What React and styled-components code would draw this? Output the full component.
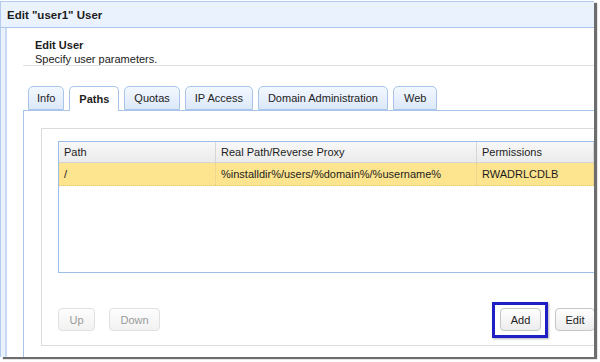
import React from "react";
import styled, { createGlobalStyle, css } from "styled-components";

const Global = createGlobalStyle`
  * { box-sizing: border-box; }
  html, body { margin: 0; padding: 0; background: #fff; }
  body { font-family: "Liberation Sans", Arial, Helvetica, sans-serif; font-size: 11px; color: #222; }
`;

const Page = styled.div`
  padding-top: 1px;
  width: 600px;
  height: 362px;
`;

const Window = styled.div`
  width: 594px;
  height: 356px;
  overflow: hidden;
  border-top: 1px solid #b3cbed;
  border-left: 1px solid #b3cbed;
  background: #eaf2fd;
  box-shadow: 3px 2px 1px rgba(60, 60, 60, 0.75);
  display: flex;
  flex-direction: column;
`;

const TitleBar = styled.div`
  height: 26px;
  flex: none;
  display: flex;
  align-items: center;
  padding-left: 6px;
  font-weight: bold;
  font-size: 11.5px;
  color: #1c1c1c;
  background: #eaf2fd;
  border-bottom: 1px solid #a9c5ea;
`;

const Body = styled.div`
  flex: 1;
  padding-left: 4px;
  background: #eaf2fd;
  display: flex;
`;

const Panel = styled.div`
  flex: 1;
  background: #fff;
  border-left: 2px solid #c8dbf6;
  padding-left: 16px;
  display: flex;
  flex-direction: column;
  min-width: 0;
`;

const Header = styled.div`
  height: 38px;
  flex: none;
  border-bottom: 1px solid #e2e2e2;
  padding: 10px 0 0 12px;
  line-height: 14px;
`;

const HeaderTitle = styled.div`
  font-weight: bold;
  font-size: 11px;
  color: #1c1c1c;
`;

const HeaderSub = styled.div`
  font-size: 11px;
  color: #222;
`;

const TabStrip = styled.div`
  display: flex;
  gap: 5px;
  padding-left: 5px;
  margin-top: 20px;
  height: 25px;
  flex: none;
  position: relative;
  z-index: 1;
`;

const Tab = styled.div`
  height: ${(p) => (p.$active ? "25px" : "24px")};
  padding: 0 ${(p) => p.$pad}px;
  display: flex;
  align-items: center;
  font-size: 11px;
  color: #222;
  font-weight: ${(p) => (p.$active ? "bold" : "normal")};
  border: 1px solid #a9c5ea;
  border-bottom: ${(p) => (p.$active ? "none" : "1px solid #a9c5ea")};
  border-radius: 5px 5px 0 0;
  background: ${(p) =>
    p.$active ? "#fff" : "linear-gradient(#f3f8fe, #dce8f9)"};
`;

const TabPanel = styled.div`
  flex: 1;
  border-top: 1px solid #a9c5ea;
  border-left: 1px solid #a9c5ea;
  margin-top: -1px;
  padding: 17px 0 0 17px;
  width: 700px;
`;

const Fieldset = styled.div`
  width: 571px;
  height: 218px;
  border: 1px solid #dcdcdc;
  padding: 12px 16px 0 16px;
`;

const Grid = styled.div`
  height: 132px;
  border: 1px solid #9dbde9;
`;

const Row = styled.div`
  display: grid;
  grid-template-columns: 157px 261px 1fr;
  height: ${(p) => (p.$head ? "21px" : "23px")};
  background: ${(p) =>
    p.$head ? "linear-gradient(#f8f8f8, #ebebeb)" : "#fde48f"};
  border-bottom: 1px ${(p) => (p.$head ? "solid #d4d4d4" : "dotted #e3c878")};
`;

const Cell = styled.div`
  display: flex;
  align-items: center;
  padding-left: 5px;
  font-size: 11px;
  color: #1c1c1c;
  border-right: 1px ${(p) => (p.$head ? "solid #d6d6d6" : "dotted #e0cb88")};
  white-space: nowrap;
  overflow: hidden;
`;

const ButtonRow = styled.div`
  display: flex;
  margin-top: 35px;
  gap: 14px;
`;

const Spacer = styled.div`
  flex: 1;
`;

const Button = styled.div`
  position: relative;
  height: 23px;
  width: ${(p) => p.$w}px;
  display: flex;
  align-items: center;
  justify-content: center;
  font-size: 11px;
  color: ${(p) => (p.$disabled ? "#9a9a9a" : "#222")};
  border: 1px solid ${(p) => (p.$disabled ? "#e0e0e0" : "#c6c6c6")};
  border-radius: 4px;
  background: ${(p) =>
    p.$disabled ? "linear-gradient(#fdfdfd, #f2f2f2)" : "linear-gradient(#ffffff, #ececec)"};
  ${(p) =>
    p.$highlight &&
    css`
      &::after {
        content: "";
        position: absolute;
        left: -9px;
        right: -8px;
        top: -7px;
        bottom: -8px;
        border: 3px solid #1f1fc6;
        box-shadow: 1px 1px 2px rgba(0, 0, 0, 0.3);
        pointer-events: none;
      }
    `}
`;

const tabs = [
  { label: "Info", pad: 8 },
  { label: "Paths", pad: 9, active: true },
  { label: "Quotas", pad: 9 },
  { label: "IP Access", pad: 9 },
  { label: "Domain Administration", pad: 9 },
  { label: "Web", pad: 10 },
];

export default function App() {
  return (
    <>
      <Global />
      <Page>
        <Window>
          <TitleBar>Edit "user1" User</TitleBar>
          <Body>
            <Panel>
              <Header>
                <HeaderTitle>Edit User</HeaderTitle>
                <HeaderSub>Specify user parameters.</HeaderSub>
              </Header>
              <TabStrip>
                {tabs.map((t) => (
                  <Tab key={t.label} $active={t.active} $pad={t.pad}>
                    {t.label}
                  </Tab>
                ))}
              </TabStrip>
              <TabPanel>
                <Fieldset>
                  <Grid>
                    <Row $head>
                      <Cell $head>Path</Cell>
                      <Cell $head>Real Path/Reverse Proxy</Cell>
                      <Cell $head>Permissions</Cell>
                    </Row>
                    <Row>
                      <Cell>/</Cell>
                      <Cell>%installdir%/users/%domain%/%username%</Cell>
                      <Cell>RWADRLCDLB</Cell>
                    </Row>
                  </Grid>
                  <ButtonRow>
                    <Button $w={37} $disabled>Up</Button>
                    <Button $w={51} $disabled>Down</Button>
                    <Spacer />
                    <Button $w={41} $highlight>Add</Button>
                    <Button $w={40}>Edit</Button>
                  </ButtonRow>
                </Fieldset>
              </TabPanel>
            </Panel>
          </Body>
        </Window>
      </Page>
    </>
  );
}
